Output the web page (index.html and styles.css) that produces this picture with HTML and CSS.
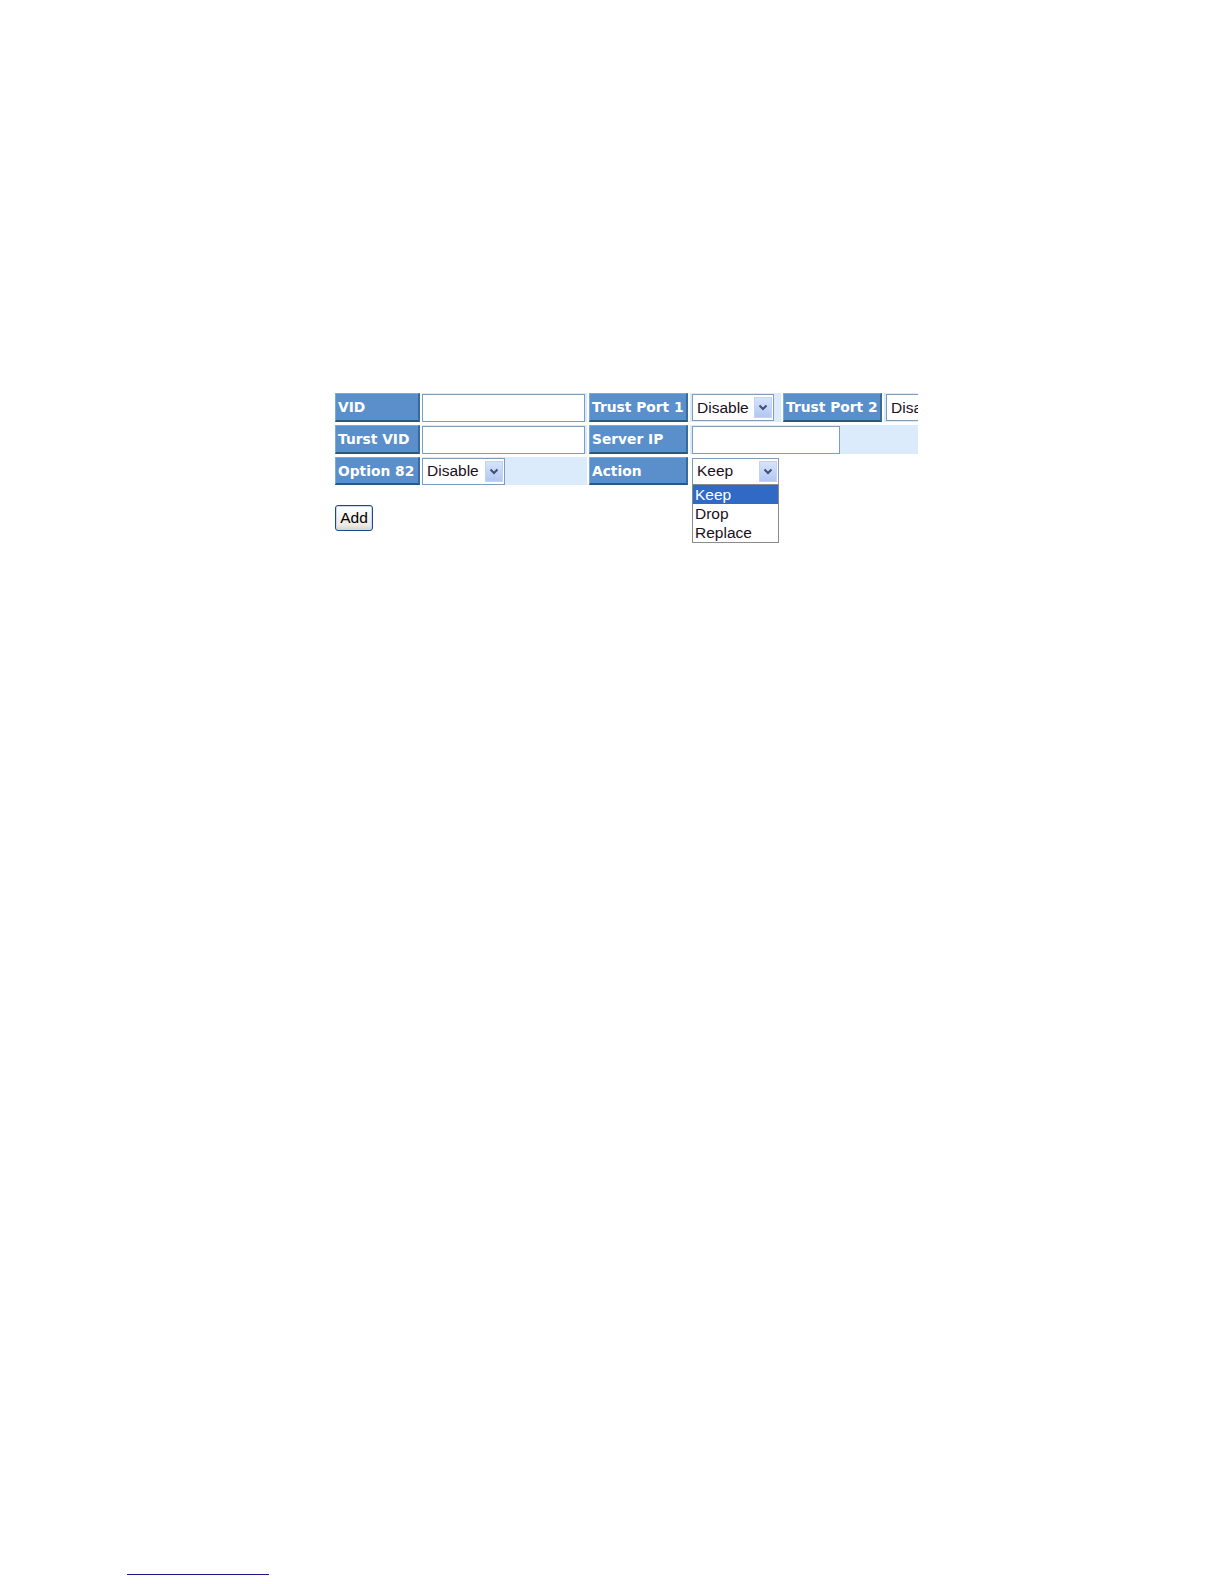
FILE: index.html
```html
<!DOCTYPE html>
<html>
<head>
<meta charset="utf-8">
<link rel="stylesheet" href="styles.css">
</head>
<body>
<div class="page">
  <div class="form-area">
    <div class="grid">
      <div class="hd">VID</div>
      <div class="cell"><div class="input w163"></div></div>
      <div class="hd">Trust Port 1</div>
      <div class="cell inset"><div class="select w82"><span class="val">Disable</span><span class="btn"><svg width="10" height="7" viewBox="0 0 10 7"><path d="M1.5 1.5 L5 5 L8.5 1.5" fill="none" stroke="#3d5077" stroke-width="2"/></svg></span></div></div>
      <div class="hd">Trust Port 2</div>
      <div class="cell inset clip"><div class="select w82"><span class="val">Disable</span><span class="btn"><svg width="10" height="7" viewBox="0 0 10 7"><path d="M1.5 1.5 L5 5 L8.5 1.5" fill="none" stroke="#3d5077" stroke-width="2"/></svg></span></div></div>

      <div class="hd">Turst VID</div>
      <div class="cell"><div class="input w163"></div></div>
      <div class="hd">Server IP</div>
      <div class="cell inset span3"><div class="input w148"></div></div>

      <div class="hd">Option 82</div>
      <div class="cell"><div class="select w83"><span class="val">Disable</span><span class="btn"><svg width="10" height="7" viewBox="0 0 10 7"><path d="M1.5 1.5 L5 5 L8.5 1.5" fill="none" stroke="#3d5077" stroke-width="2"/></svg></span></div></div>
      <div class="hd">Action</div>
      <div class="cell plain inset">
        <div class="select w87"><span class="val">Keep</span><span class="btn"><svg width="10" height="7" viewBox="0 0 10 7"><path d="M1.5 1.5 L5 5 L8.5 1.5" fill="none" stroke="#3d5077" stroke-width="2"/></svg></span>
          <div class="list">
            <div class="opt sel">Keep</div>
            <div class="opt">Drop</div>
            <div class="opt">Replace</div>
          </div>
        </div>
      </div>
    </div>
    <div class="actions"><button class="add">Add</button></div>
  </div>
  <div class="footer"><div class="rule"></div></div>
</div>
</body>
</html>
```
FILE: styles.css
```css
html, body {
  margin: 0;
  padding: 0;
  background: #ffffff;
}
.page {
  width: 1224px;
  height: 1584px;
  overflow: hidden;
  display: flex;
  flex-direction: column;
}
.form-area {
  padding-top: 393px;
  padding-left: 335px;
}
.grid {
  display: grid;
  grid-template-columns: 85px 165px 99px 91px 99px 34px;
  grid-template-rows: 29px 29px 28px;
  column-gap: 2px;
  row-gap: 3px;
  width: 583px;
}
.hd {
  background: #5b8fcb;
  border-top: 1px solid #7eaadb;
  border-left: 1px solid #7eaadb;
  border-right: 2px solid #3b6a9c;
  border-bottom: 2px solid #2c5684;
  color: #ffffff;
  font-family: "DejaVu Sans", Verdana, sans-serif;
  font-weight: bold;
  font-size: 13.8px;
  display: flex;
  align-items: center;
  padding-left: 2px;
  white-space: nowrap;
  box-sizing: border-box;
  overflow: hidden;
}
.cell {
  background: #dcebfc;
  display: flex;
  align-items: center;
  min-width: 0;
}
.cell.plain {
  background: transparent;
}
.cell.inset {
  padding-left: 2px;
}
.cell.clip {
  overflow: hidden;
}
.span3 {
  grid-column: span 3;
}
.input {
  height: 28px;
  background: #ffffff;
  border: 1px solid #7f9db9;
  box-sizing: border-box;
  flex: none;
}
.w163 { width: 163px; }
.w148 { width: 148px; }
.w82 { width: 82px; }
.w83 { width: 83px; }
.w87 { width: 87px; }
.select {
  position: relative;
  height: 27px;
  background: #ffffff;
  border: 1px solid #7f9db9;
  box-sizing: border-box;
  display: flex;
  align-items: center;
  flex: none;
  font-family: "Liberation Sans", Arial, sans-serif;
  font-size: 15.5px;
  color: #1a1020;
}
.select .val {
  flex: 1;
  padding-left: 4px;
  white-space: nowrap;
  overflow: hidden;
}
.select .btn {
  width: 18px;
  height: 21px;
  margin-right: 1px;
  background: linear-gradient(#d6e3fc, #b2c7f2);
  border: 1px solid #c3d3f6;
  box-sizing: border-box;
  display: flex;
  align-items: center;
  justify-content: center;
  flex: none;
}
.list {
  position: absolute;
  left: -1px;
  top: 25px;
  width: 87px;
  border: 1px solid #8a8a8a;
  background: #ffffff;
  box-sizing: border-box;
  z-index: 2;
}
.opt {
  height: 19px;
  line-height: 19px;
  padding-left: 2px;
  font-family: "Liberation Sans", Arial, sans-serif;
  font-size: 15.5px;
  color: #1a1020;
  white-space: nowrap;
}
.opt.sel {
  background: #316ac5;
  color: #ffffff;
}
.actions {
  margin-top: 20px;
}
.add {
  width: 38px;
  height: 26px;
  padding: 0;
  border: 1px solid #1c4a8a;
  border-radius: 3px;
  background: linear-gradient(#ffffff, #eceae4 80%, #d8d4c8);
  box-shadow: inset 0 0 0 1px #c9d8ef;
  font-family: "Liberation Sans", Arial, sans-serif;
  font-size: 15.5px;
  color: #000000;
}
.footer {
  margin-top: auto;
  padding-left: 127px;
  padding-bottom: 9px;
}
.rule {
  width: 142px;
  height: 0;
  border-top: 1px solid #1a1a86;
}
```
